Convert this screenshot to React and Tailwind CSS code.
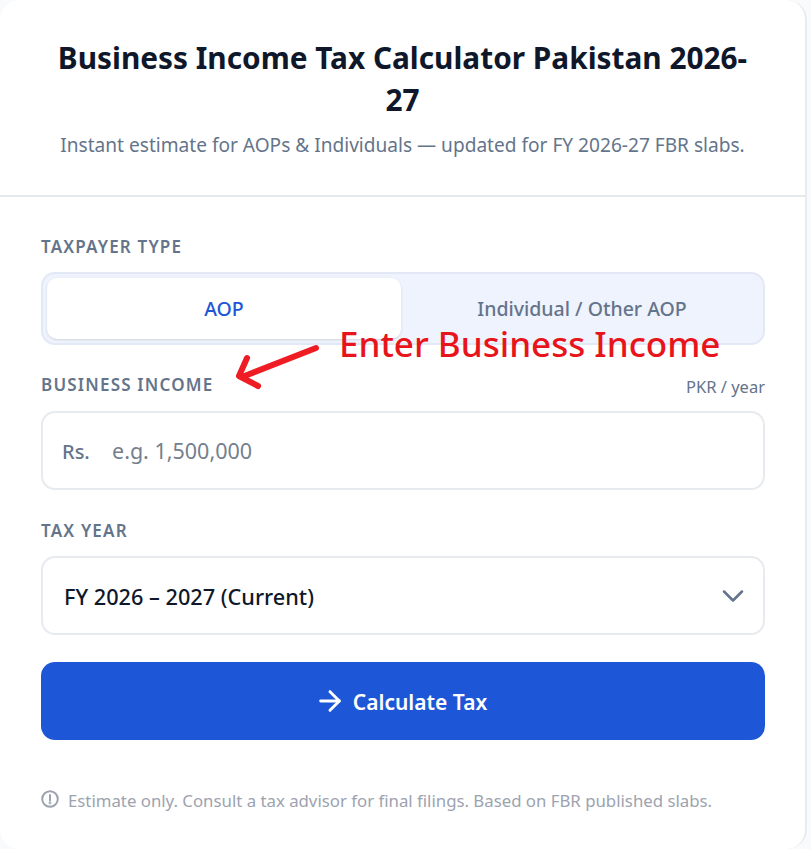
import React from "react";
import { ArrowRight, ChevronDown } from "lucide-react";

const labelCls = "text-[17px] leading-[22px] font-semibold tracking-[0.07em] text-[#64748b] uppercase";

const App = () => {
  return (
    <div className="h-[849px] w-[811px] bg-[#f8fafc] font-['Noto_Sans',sans-serif] overflow-hidden">
      <div className="relative w-[807px] h-[849px] bg-white border-r-2 border-[#e8ebef] rounded-[20px]">
        {/* Header */}
        <div className="h-[197px] px-[48px] pt-[37px] text-center border-b-2 border-[#e5e9ee]">
          <h1 className="text-[29.8px] leading-[42px] font-bold text-[#0f172a]">
            Business Income Tax Calculator Pakistan 2026-27
          </h1>
          <p className="mt-[11px] text-[19.1px] leading-[26px] text-[#64748b]">
            Instant estimate for AOPs &amp; Individuals — updated for FY 2026-27 FBR slabs.
          </p>
        </div>

        {/* Form */}
        <div className="px-[41px] pt-[39px]">
          <div className={labelCls}>Taxpayer Type</div>
          <div className="mt-[14px] w-[724px] h-[73px] p-[4px] flex bg-[#eff3fd] border-2 border-[#e2e8f6] rounded-[14px]">
            <div className="w-[354px] flex items-center justify-center bg-white rounded-[10px] shadow-sm text-[19.5px] font-medium text-[#1d57d8]">
              AOP
            </div>
            <div className="flex-1 pl-[4px] flex items-center justify-center text-[19.5px] font-medium text-[#64748b]">
              Individual / Other AOP
            </div>
          </div>

          <div className="mt-[29px] w-[724px] flex items-end justify-between">
            <div className={labelCls}>Business Income</div>
            <div className="text-[16.5px] leading-[22px] translate-y-[2px] text-[#64748b]">PKR / year</div>
          </div>
          <div className="mt-[15px] w-[724px] h-[79px] pl-[19px] pr-[20px] pt-[2px] flex items-center bg-white border-2 border-[#e7eaee] rounded-[14px]">
            <span className="font-medium text-[#64748b] text-[20px] w-[50px]">Rs.</span>
            <span className="text-[21.5px] text-[#757f8e]">e.g. 1,500,000</span>
          </div>

          <div className={`mt-[30px] ${labelCls}`}>Tax Year</div>
          <div className="mt-[14px] w-[724px] h-[79px] pl-[21px] pr-[12px] flex items-center justify-between bg-white border-2 border-[#e7eaee] rounded-[14px]">
            <span className="pt-[4px] text-[21.7px] font-medium text-[#0f172a]">FY 2026 – 2027 (Current)</span>
            <ChevronDown size={36} strokeWidth={1.7} className="text-[#64748b]" />
          </div>

          <button className="mt-[27px] w-[724px] h-[78px] pr-[5px] flex items-center justify-center gap-[7px] bg-[#1d57d8] rounded-[14px] text-white text-[21px] font-semibold">
            <ArrowRight size={32} strokeWidth={2.2} />
            <span className="pt-[4px]">Calculate Tax</span>
          </button>

          <div className="mt-[49px] flex items-center gap-[9px] text-[16.8px] leading-[24px] text-[#9ca3af]">
            <svg width="18" height="18" viewBox="0 0 18 18" fill="none" stroke="#9ca3af" strokeWidth="2" className="-mt-[4px]">
              <circle cx="9" cy="9" r="7.8" />
              <path d="M9 5v5.5" strokeLinecap="round" />
              <circle cx="9" cy="13" r="0.4" />
            </svg>
            Estimate only. Consult a tax advisor for final filings. Based on FBR published slabs.
          </div>
        </div>

        {/* Annotation over the form */}
        <div className="absolute left-[339px] top-[322px] text-[35px] leading-[44px] font-medium text-[#e8141c] whitespace-nowrap">
          Enter Business Income
        </div>
        <svg className="absolute left-[230px] top-[340px]" width="95" height="52" viewBox="0 0 95 52" fill="none" stroke="#f01c24" strokeLinecap="round" strokeLinejoin="round">
          <path d="M86 8 L12 37" strokeWidth="6" />
          <path d="M17 18 L9 36 L28 46" strokeWidth="6" />
        </svg>
      </div>
    </div>
  );
};

export default App;
